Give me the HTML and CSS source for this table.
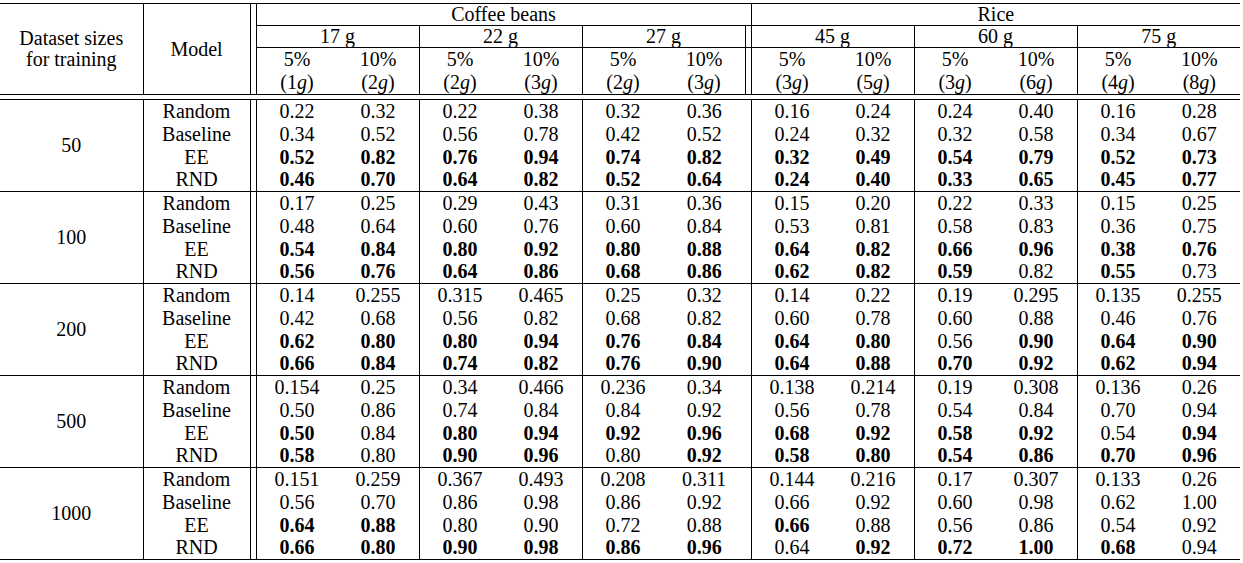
FILE: index.html
```html
<!DOCTYPE html>
<html lang="en">
<head>
<meta charset="utf-8">
<title>Results table</title>
<link rel="stylesheet" href="styles.css">
</head>
<body>
<table class="results">
  <colgroup>
    <col class="c-size"><col class="c-model"><col class="c-gap">
    <col class="c-val"><col class="c-val"><col class="c-val"><col class="c-val"><col class="c-val"><col class="c-val">
    <col class="c-gap">
    <col class="c-val"><col class="c-val"><col class="c-val"><col class="c-val"><col class="c-val"><col class="c-val">
  </colgroup>
  <thead>
    <tr class="r1">
      <th rowspan="3" class="size-head">Dataset sizes<br>for training</th>
      <th rowspan="3" class="model-head">Model</th>
      <th rowspan="3" class="g"></th>
      <th colspan="7" class="s u">Coffee beans</th>
      <th colspan="6" class="u">Rice</th>
    </tr>
    <tr class="r2">
      <th colspan="2" class="s">17 g</th>
      <th colspan="2" class="s">22 g</th>
      <th colspan="2" class="s">27 g</th>
      <th class="s"></th>
      <th colspan="2" class="s">45 g</th>
      <th colspan="2" class="s">60 g</th>
      <th colspan="2">75 g</th>
    </tr>
    <tr class="r3">
      <th>5%<br>(1<i>g</i>)</th><th class="s">10%<br>(2<i>g</i>)</th>
      <th>5%<br>(2<i>g</i>)</th><th class="s">10%<br>(3<i>g</i>)</th>
      <th>5%<br>(2<i>g</i>)</th><th class="s">10%<br>(3<i>g</i>)</th>
      <th class="s"></th>
      <th>5%<br>(3<i>g</i>)</th><th class="s">10%<br>(5<i>g</i>)</th>
      <th>5%<br>(3<i>g</i>)</th><th class="s">10%<br>(6<i>g</i>)</th>
      <th>5%<br>(4<i>g</i>)</th><th>10%<br>(8<i>g</i>)</th>
    </tr>
    <tr class="dbl"><td colspan="16"></td></tr>
  </thead>

  <tbody class="set">
    <tr><td rowspan="4" class="size">50</td><td>Random</td><td class="g"></td><td>0.22</td><td class="s">0.32</td><td>0.22</td><td class="s">0.38</td><td>0.32</td><td>0.36</td><td class="s"></td><td>0.16</td><td class="s">0.24</td><td>0.24</td><td class="s">0.40</td><td>0.16</td><td>0.28</td></tr>
    <tr><td>Baseline</td><td class="g"></td><td>0.34</td><td class="s">0.52</td><td>0.56</td><td class="s">0.78</td><td>0.42</td><td>0.52</td><td class="s"></td><td>0.24</td><td class="s">0.32</td><td>0.32</td><td class="s">0.58</td><td>0.34</td><td>0.67</td></tr>
    <tr><td>EE</td><td class="g"></td><td><b>0.52</b></td><td class="s"><b>0.82</b></td><td><b>0.76</b></td><td class="s"><b>0.94</b></td><td><b>0.74</b></td><td><b>0.82</b></td><td class="s"></td><td><b>0.32</b></td><td class="s"><b>0.49</b></td><td><b>0.54</b></td><td class="s"><b>0.79</b></td><td><b>0.52</b></td><td><b>0.73</b></td></tr>
    <tr><td>RND</td><td class="g"></td><td><b>0.46</b></td><td class="s"><b>0.70</b></td><td><b>0.64</b></td><td class="s"><b>0.82</b></td><td><b>0.52</b></td><td><b>0.64</b></td><td class="s"></td><td><b>0.24</b></td><td class="s"><b>0.40</b></td><td><b>0.33</b></td><td class="s"><b>0.65</b></td><td><b>0.45</b></td><td><b>0.77</b></td></tr>
  </tbody>

  <tbody class="set">
    <tr><td rowspan="4" class="size">100</td><td>Random</td><td class="g"></td><td>0.17</td><td class="s">0.25</td><td>0.29</td><td class="s">0.43</td><td>0.31</td><td>0.36</td><td class="s"></td><td>0.15</td><td class="s">0.20</td><td>0.22</td><td class="s">0.33</td><td>0.15</td><td>0.25</td></tr>
    <tr><td>Baseline</td><td class="g"></td><td>0.48</td><td class="s">0.64</td><td>0.60</td><td class="s">0.76</td><td>0.60</td><td>0.84</td><td class="s"></td><td>0.53</td><td class="s">0.81</td><td>0.58</td><td class="s">0.83</td><td>0.36</td><td>0.75</td></tr>
    <tr><td>EE</td><td class="g"></td><td><b>0.54</b></td><td class="s"><b>0.84</b></td><td><b>0.80</b></td><td class="s"><b>0.92</b></td><td><b>0.80</b></td><td><b>0.88</b></td><td class="s"></td><td><b>0.64</b></td><td class="s"><b>0.82</b></td><td><b>0.66</b></td><td class="s"><b>0.96</b></td><td><b>0.38</b></td><td><b>0.76</b></td></tr>
    <tr><td>RND</td><td class="g"></td><td><b>0.56</b></td><td class="s"><b>0.76</b></td><td><b>0.64</b></td><td class="s"><b>0.86</b></td><td><b>0.68</b></td><td><b>0.86</b></td><td class="s"></td><td><b>0.62</b></td><td class="s"><b>0.82</b></td><td><b>0.59</b></td><td class="s">0.82</td><td><b>0.55</b></td><td>0.73</td></tr>
  </tbody>

  <tbody class="set">
    <tr><td rowspan="4" class="size">200</td><td>Random</td><td class="g"></td><td>0.14</td><td class="s">0.255</td><td>0.315</td><td class="s">0.465</td><td>0.25</td><td>0.32</td><td class="s"></td><td>0.14</td><td class="s">0.22</td><td>0.19</td><td class="s">0.295</td><td>0.135</td><td>0.255</td></tr>
    <tr><td>Baseline</td><td class="g"></td><td>0.42</td><td class="s">0.68</td><td>0.56</td><td class="s">0.82</td><td>0.68</td><td>0.82</td><td class="s"></td><td>0.60</td><td class="s">0.78</td><td>0.60</td><td class="s">0.88</td><td>0.46</td><td>0.76</td></tr>
    <tr><td>EE</td><td class="g"></td><td><b>0.62</b></td><td class="s"><b>0.80</b></td><td><b>0.80</b></td><td class="s"><b>0.94</b></td><td><b>0.76</b></td><td><b>0.84</b></td><td class="s"></td><td><b>0.64</b></td><td class="s"><b>0.80</b></td><td>0.56</td><td class="s"><b>0.90</b></td><td><b>0.64</b></td><td><b>0.90</b></td></tr>
    <tr><td>RND</td><td class="g"></td><td><b>0.66</b></td><td class="s"><b>0.84</b></td><td><b>0.74</b></td><td class="s"><b>0.82</b></td><td><b>0.76</b></td><td><b>0.90</b></td><td class="s"></td><td><b>0.64</b></td><td class="s"><b>0.88</b></td><td><b>0.70</b></td><td class="s"><b>0.92</b></td><td><b>0.62</b></td><td><b>0.94</b></td></tr>
  </tbody>

  <tbody class="set">
    <tr><td rowspan="4" class="size">500</td><td>Random</td><td class="g"></td><td>0.154</td><td class="s">0.25</td><td>0.34</td><td class="s">0.466</td><td>0.236</td><td>0.34</td><td class="s"></td><td>0.138</td><td class="s">0.214</td><td>0.19</td><td class="s">0.308</td><td>0.136</td><td>0.26</td></tr>
    <tr><td>Baseline</td><td class="g"></td><td>0.50</td><td class="s">0.86</td><td>0.74</td><td class="s">0.84</td><td>0.84</td><td>0.92</td><td class="s"></td><td>0.56</td><td class="s">0.78</td><td>0.54</td><td class="s">0.84</td><td>0.70</td><td>0.94</td></tr>
    <tr><td>EE</td><td class="g"></td><td><b>0.50</b></td><td class="s">0.84</td><td><b>0.80</b></td><td class="s"><b>0.94</b></td><td><b>0.92</b></td><td><b>0.96</b></td><td class="s"></td><td><b>0.68</b></td><td class="s"><b>0.92</b></td><td><b>0.58</b></td><td class="s"><b>0.92</b></td><td>0.54</td><td><b>0.94</b></td></tr>
    <tr><td>RND</td><td class="g"></td><td><b>0.58</b></td><td class="s">0.80</td><td><b>0.90</b></td><td class="s"><b>0.96</b></td><td>0.80</td><td><b>0.92</b></td><td class="s"></td><td><b>0.58</b></td><td class="s"><b>0.80</b></td><td><b>0.54</b></td><td class="s"><b>0.86</b></td><td><b>0.70</b></td><td><b>0.96</b></td></tr>
  </tbody>

  <tbody class="set">
    <tr><td rowspan="4" class="size">1000</td><td>Random</td><td class="g"></td><td>0.151</td><td class="s">0.259</td><td>0.367</td><td class="s">0.493</td><td>0.208</td><td>0.311</td><td class="s"></td><td>0.144</td><td class="s">0.216</td><td>0.17</td><td class="s">0.307</td><td>0.133</td><td>0.26</td></tr>
    <tr><td>Baseline</td><td class="g"></td><td>0.56</td><td class="s">0.70</td><td>0.86</td><td class="s">0.98</td><td>0.86</td><td>0.92</td><td class="s"></td><td>0.66</td><td class="s">0.92</td><td>0.60</td><td class="s">0.98</td><td>0.62</td><td>1.00</td></tr>
    <tr><td>EE</td><td class="g"></td><td><b>0.64</b></td><td class="s"><b>0.88</b></td><td>0.80</td><td class="s">0.90</td><td>0.72</td><td>0.88</td><td class="s"></td><td><b>0.66</b></td><td class="s">0.88</td><td>0.56</td><td class="s">0.86</td><td>0.54</td><td>0.92</td></tr>
    <tr><td>RND</td><td class="g"></td><td><b>0.66</b></td><td class="s"><b>0.80</b></td><td><b>0.90</b></td><td class="s"><b>0.98</b></td><td><b>0.86</b></td><td><b>0.96</b></td><td class="s"></td><td>0.64</td><td class="s"><b>0.92</b></td><td><b>0.72</b></td><td class="s"><b>1.00</b></td><td><b>0.68</b></td><td>0.94</td></tr>
  </tbody>
</table>
</body>
</html>
```

FILE: styles.css
```css
html, body {
  margin: 0;
  background: #fff;
}

body {
  padding-top: 3px;
  font-family: "Liberation Serif", "Times New Roman", serif;
  color: #000;
}

.results {
  border-collapse: collapse;
  table-layout: fixed;
  width: 1240px;
  font-size: 20px;
  border-top: 1px solid #000;
  border-bottom: 1px solid #000;
}

.c-size { width: 143px; }
.c-model { width: 107px; }
.c-gap { width: 6px; }
.c-val { width: 81.5px; }

.results th,
.results td {
  padding: 0;
  text-align: center;
  vertical-align: middle;
  font-weight: normal;
  line-height: 21px;
  white-space: nowrap;
}

.results b {
  font-weight: bold;
}

.r1 { height: 22px; }
.r2 { height: 22px; }
.r3 { height: 47px; }
.r3 th { line-height: 23px; }

.r2 th { border-bottom: 1px solid #000; }

.size-head {
  line-height: 22px;
  padding-bottom: 14px;
}

.model-head {
  padding-bottom: 12px;
}

.size-head,
.size {
  border-right: 1px solid #000;
}

.g {
  border-left: 1px solid #000;
  border-right: 1px solid #000;
}

.s { border-right: 1px solid #000; }
.u { border-bottom: 1px solid #000; }

.dbl td {
  height: 4px;
  line-height: 4px;
  border-top: 1px solid #000;
  border-bottom: 1px solid #000;
}

tbody.set { border-top: 1px solid #000; }

tbody.set tr { height: 23px; }
```
